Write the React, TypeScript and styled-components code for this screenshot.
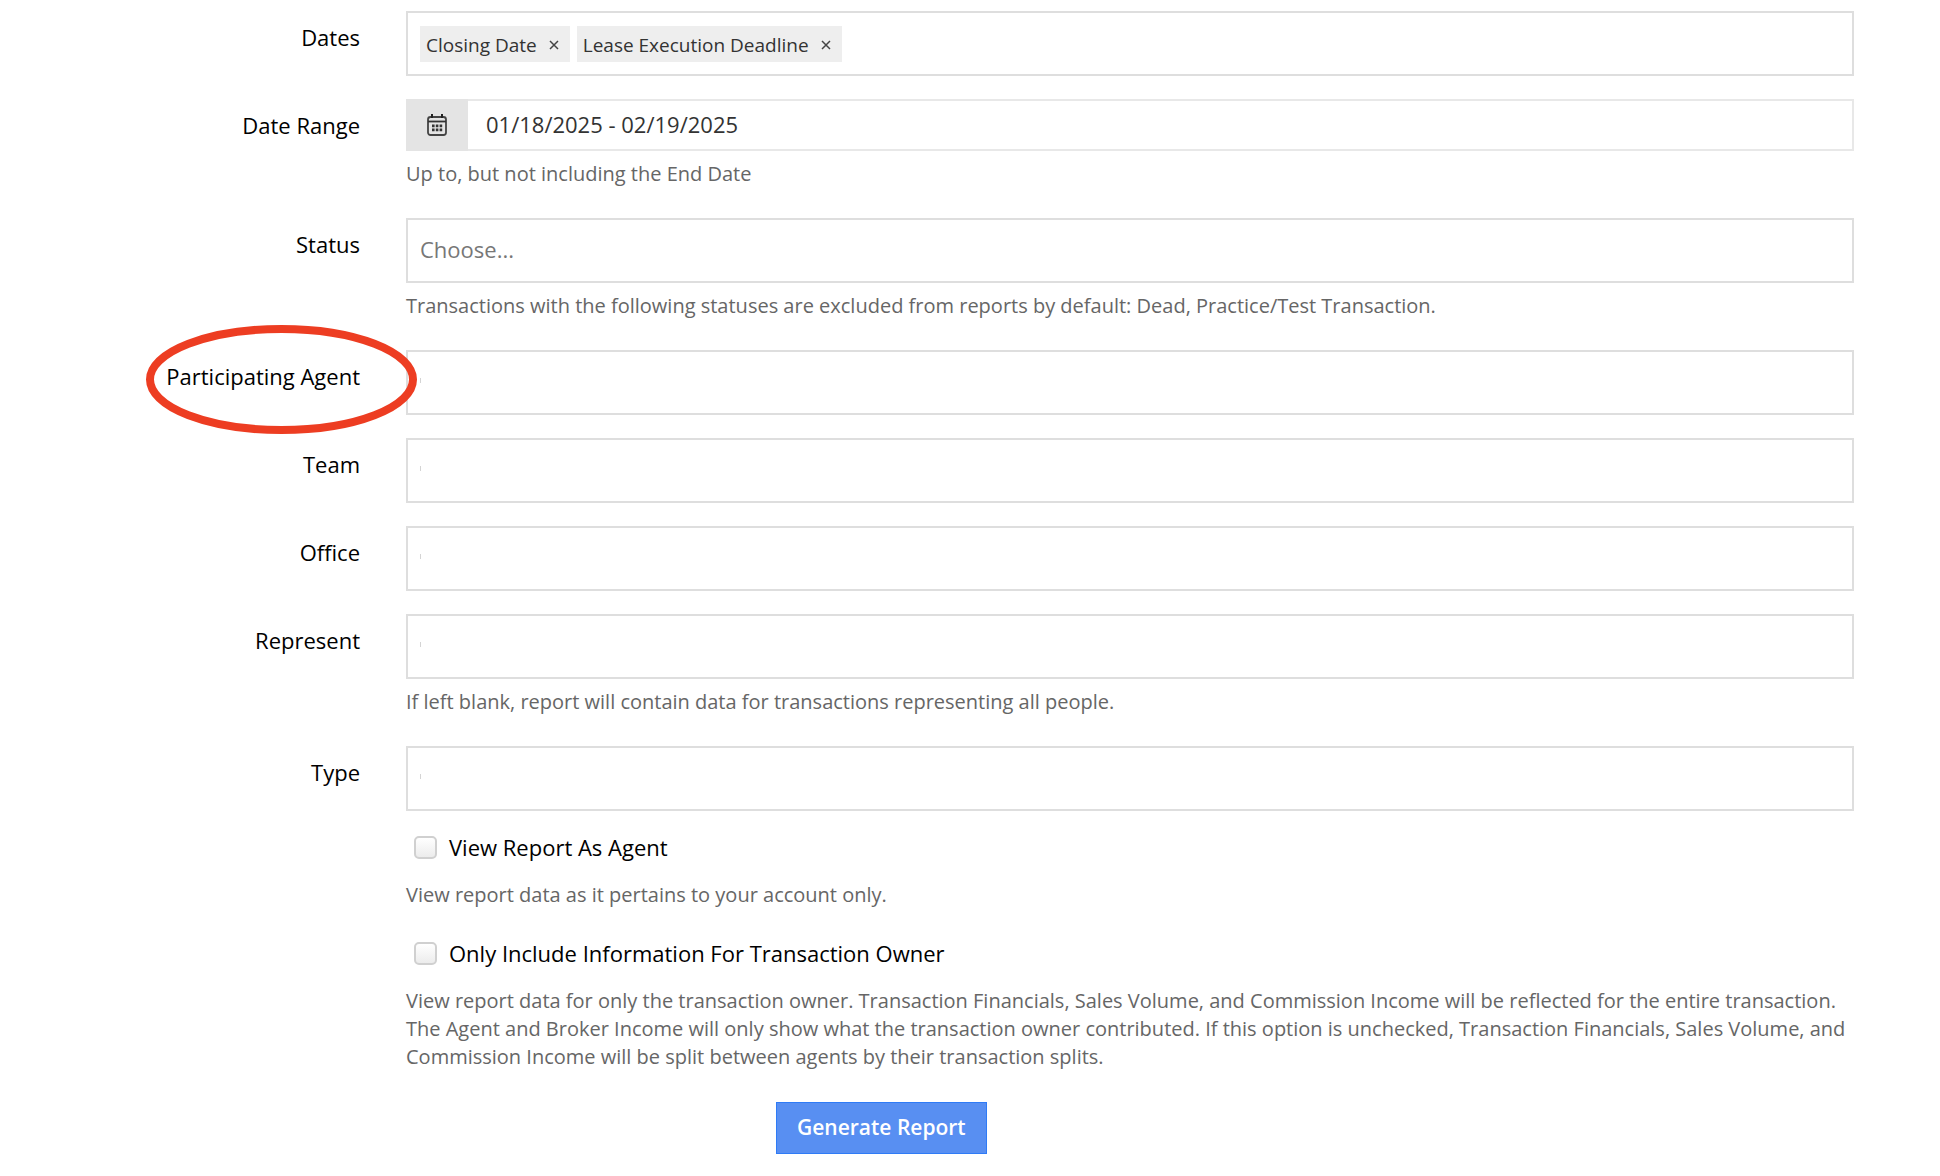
import React from "react";
import styled, { createGlobalStyle } from "styled-components";

const GlobalStyle = createGlobalStyle`
  *, *::before, *::after { box-sizing: border-box; }
  body {
    margin: 0;
    background: #fff;
    color: #111;
    font-family: "Open Sans", "Noto Sans", sans-serif;
    font-size: 22px;
    line-height: 28px;
  }
  button, input { font: inherit; color: inherit; }
`;

const Form = styled.form`
  display: flex;
  flex-direction: column;
  gap: 23px;
  padding: 11px 86px 22px 0;
`;

const Row = styled.div`
  display: grid;
  grid-template-columns: 360px minmax(0, 1fr);
  column-gap: 46px;
`;

const LabelCell = styled.div`
  position: relative;
  padding-top: 12px;
  text-align: right;
`;

const Label = styled.label`
  color: #000;
`;

const FieldCell = styled.div`
  grid-column: 2;
`;

const TextField = styled.input<{ $marked?: boolean }>`
  display: block;
  width: 100%;
  height: 65px;
  padding: 0 12px 4px;
  border: 2px solid #dedede;
  border-radius: 0;
  outline: none;
  background: ${(p) =>
    p.$marked
      ? "linear-gradient(#d4d4d4, #d4d4d4) 12px 26px / 1px 5px no-repeat #fff"
      : "#fff"};

  &::placeholder {
    color: #777;
    opacity: 1;
  }
`;

const TagField = styled.div`
  display: flex;
  align-items: flex-start;
  gap: 7px;
  height: 65px;
  padding: 13px 12px;
  border: 2px solid #dedede;
`;

const Tag = styled.span`
  display: flex;
  align-items: center;
  gap: 12px;
  height: 36px;
  padding: 2px 11px 0 6px;
  background: #eee;
  color: #333;
  font-size: 19px;
`;

const TagRemove = styled.button`
  display: flex;
  padding: 0;
  border: 0;
  background: none;
  cursor: pointer;
`;

const TagInput = styled.input`
  flex: 1;
  min-width: 0;
  height: 36px;
  padding: 0;
  border: 0;
  outline: none;
  background: none;
`;

const DateGroup = styled.div`
  display: flex;
  height: 52px;
  border: 2px solid #e8e8e8;
  border-left: 0;
`;

const DateAddon = styled.span`
  display: flex;
  align-items: center;
  justify-content: center;
  flex: none;
  width: 62px;
  margin: -2px 0;
  background: #e4e4e4;
`;

const DateInput = styled.input`
  flex: 1;
  min-width: 0;
  padding: 0 18px 2px;
  border: 0;
  outline: none;
  background: #fff;
  color: #333;
`;

const Help = styled.p<{ $loose?: boolean }>`
  margin: ${(p) => (p.$loose ? "19px 0 8px" : "9px 0 7px")};
  color: #666;
  font-size: 20px;
`;

const CheckLabel = styled.label`
  display: flex;
  align-items: center;
  gap: 12px;
  padding: 0 0 2px 8px;
  color: #000;
  line-height: 26px;
`;

const Checkbox = styled.input`
  appearance: none;
  flex: none;
  width: 23px;
  height: 23px;
  margin: 0;
  border: 2px solid #d0d0d0;
  border-radius: 5px;
  background: linear-gradient(#fff, #ececec);

  &:checked {
    background: #588ff2;
  }
`;

const Actions = styled.div`
  padding-left: 40vw;
`;

const Submit = styled.button`
  height: 52px;
  padding: 0 20px 2px;
  border: 1px solid #2f7bf6;
  background: #588ff2;
  color: #fff;
  font-size: 21px;
  font-weight: 600;
  cursor: pointer;
`;

const Highlight = styled.svg`
  position: absolute;
  top: -26px;
  right: -58px;
  width: 273px;
  height: 111px;
  z-index: 1;
  pointer-events: none;
`;

function RemoveIcon() {
  return (
    <svg width="10" height="10" viewBox="0 0 10 10" aria-hidden="true">
      <path d="M1 1L9 9M9 1L1 9" stroke="#444" strokeWidth="1.5" fill="none" />
    </svg>
  );
}

function CalendarIcon() {
  return (
    <svg width="20" height="22" viewBox="0 0 20 22" aria-hidden="true">
      <rect x="1" y="3" width="18" height="18" rx="2.5" fill="none" stroke="#444" strokeWidth="1.8" />
      <path d="M1 7.5H19" stroke="#333" strokeWidth="1.8" />
      <path d="M5 0V4M15 0V4" stroke="#222" strokeWidth="2" />
      <path
        d="M5 10.5h2.6v2.8H5zM8.8 10.5h2.6v2.8H8.8zM12.6 10.5h2.6v2.8h-2.6zM5 14.5h2.6v2.8H5zM8.8 14.5h2.6v2.8H8.8zM12.6 14.5h2.6v2.8h-2.6z"
        fill="#333"
      />
    </svg>
  );
}

interface FieldProps {
  id: string;
  label: string;
  placeholder?: string;
  help?: string;
  highlighted?: boolean;
}

function Field({ id, label, placeholder, help, highlighted }: FieldProps) {
  return (
    <Row>
      <LabelCell>
        <Label htmlFor={id}>{label}</Label>
        {highlighted && (
          <Highlight viewBox="0 0 273 111" aria-hidden="true">
            <ellipse cx="136.5" cy="55.5" rx="131.5" ry="50.5" fill="none" stroke="#ed3d22" strokeWidth="8" />
          </Highlight>
        )}
      </LabelCell>
      <FieldCell>
        <TextField id={id} type="text" placeholder={placeholder} $marked={!placeholder} />
        {help && <Help>{help}</Help>}
      </FieldCell>
    </Row>
  );
}

function CheckField({ id, label, help }: { id: string; label: string; help: string }) {
  return (
    <Row>
      <FieldCell>
        <CheckLabel htmlFor={id}>
          <Checkbox id={id} type="checkbox" />
          {label}
        </CheckLabel>
        <Help $loose>{help}</Help>
      </FieldCell>
    </Row>
  );
}

const selectedDates = ["Closing Date", "Lease Execution Deadline"];

export default function App() {
  return (
    <>
      <GlobalStyle />
      <Form onSubmit={(e) => e.preventDefault()}>
        <Row>
          <LabelCell>
            <Label htmlFor="dates">Dates</Label>
          </LabelCell>
          <FieldCell>
            <TagField>
              {selectedDates.map((name) => (
                <Tag key={name}>
                  {name}
                  <TagRemove type="button" aria-label={`Remove ${name}`}>
                    <RemoveIcon />
                  </TagRemove>
                </Tag>
              ))}
              <TagInput id="dates" type="text" />
            </TagField>
          </FieldCell>
        </Row>
        <Row>
          <LabelCell>
            <Label htmlFor="range">Date Range</Label>
          </LabelCell>
          <FieldCell>
            <DateGroup>
              <DateAddon>
                <CalendarIcon />
              </DateAddon>
              <DateInput id="range" type="text" defaultValue="01/18/2025 - 02/19/2025" />
            </DateGroup>
            <Help>Up to, but not including the End Date</Help>
          </FieldCell>
        </Row>
        <Field
          id="status"
          label="Status"
          placeholder="Choose..."
          help="Transactions with the following statuses are excluded from reports by default: Dead, Practice/Test Transaction."
        />
        <Field id="agent" label="Participating Agent" highlighted />
        <Field id="team" label="Team" />
        <Field id="office" label="Office" />
        <Field
          id="represent"
          label="Represent"
          help="If left blank, report will contain data for transactions representing all people."
        />
        <Field id="type" label="Type" />
        <CheckField
          id="as-agent"
          label="View Report As Agent"
          help="View report data as it pertains to your account only."
        />
        <CheckField
          id="owner-only"
          label="Only Include Information For Transaction Owner"
          help="View report data for only the transaction owner. Transaction Financials, Sales Volume, and Commission Income will be reflected for the entire transaction. The Agent and Broker Income will only show what the transaction owner contributed. If this option is unchecked, Transaction Financials, Sales Volume, and Commission Income will be split between agents by their transaction splits."
        />
        <Actions>
          <Submit type="submit">Generate Report</Submit>
        </Actions>
      </Form>
    </>
  );
}
